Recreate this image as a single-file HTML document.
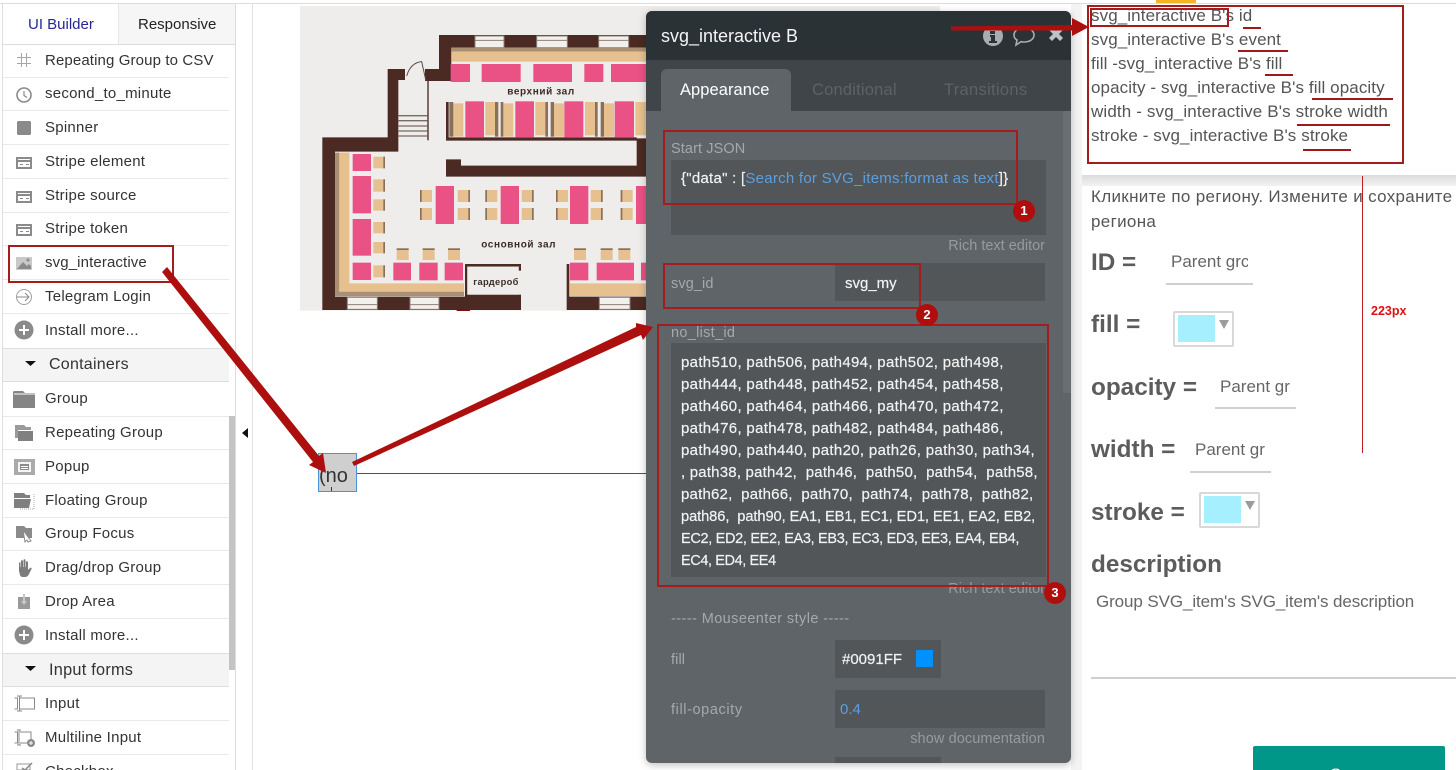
<!DOCTYPE html>
<html><head><meta charset="utf-8"><title>svg_interactive</title>
<style>
html,body{margin:0;padding:0;background:#fff}
#p{position:relative;width:1456px;height:770px;overflow:hidden;background:#fff;font-family:"Liberation Sans","Noto Sans CJK SC",sans-serif}
.a,.t,.s,.l,.pt,.r,.u,.sep,.d{position:absolute}
.t,.s,.pt,.r{white-space:nowrap}
.s{left:45px;font-size:15px;letter-spacing:.25px;line-height:20px;color:#333}
.sep{left:3px;width:226px;height:1px;background:#e9e9e9}
.pt{font-size:14.5px;line-height:20px;color:#a4a9ad;letter-spacing:.1px}
.l{left:681px;font-size:15px;line-height:22px;color:#f2f2f2;letter-spacing:.32px;-webkit-text-stroke:.2px #f2f2f2;white-space:pre}
.r{left:1091px;font-size:17px;line-height:24px;color:#555;letter-spacing:.1px}
.b{font-size:24.3px;font-weight:bold;color:#5c5c5c;line-height:30px;position:absolute;white-space:nowrap;left:1091px}
.u{height:2px;background:#a01818}
.i{position:absolute;left:1171px;font-size:17px;line-height:24px;color:#666;white-space:nowrap;overflow:hidden}
.in{position:absolute;height:2px;background:#d0d0d0;width:81px}
.d{background:#525659}
.cb{position:absolute;width:57px;height:32px;border:2px solid #d8d8d8;border-radius:2px;background:#fff}
.cb i{position:absolute;left:3px;top:2px;width:37px;height:27px;background:#a6efff}
.cb b{position:absolute;left:44px;top:7px;width:0;height:0;border-left:5px solid transparent;border-right:5px solid transparent;border-top:9px solid #9b9b9b}
.rr{position:absolute;border:2px solid #a51c1c;box-sizing:border-box}
.n{position:absolute;width:22px;height:22px;border-radius:50%;background:#b00d0d;color:#fff;font:bold 13px/22px "Liberation Sans",sans-serif;text-align:center}
</style></head><body><div id="p">

<!-- top line -->
<div class="a" style="left:0;top:3px;width:1456px;height:1px;background:#dcdcdc"></div>
<div class="a" style="left:1156px;top:0;width:40px;height:3px;background:#f3b324"></div>

<!-- sidebar -->
<div class="a" style="left:2px;top:4px;width:1px;height:766px;background:#dedede"></div>
<div class="a" style="left:235px;top:4px;width:1px;height:766px;background:#dcdcdc"></div>
<div class="a" style="left:252px;top:4px;width:1px;height:766px;background:#e2e2e2"></div>
<div class="a" style="left:118px;top:4px;width:117px;height:40px;background:#f6f6f6;border-left:1px solid #e8e8e8;box-sizing:border-box"></div>
<div class="a" style="left:3px;top:44px;width:232px;height:1px;background:#dcdcdc"></div>
<div class="t" style="left:28px;top:15px;font-size:15px;line-height:20px;color:#26269a">UI Builder</div>
<div class="t" style="left:138px;top:15px;font-size:15px;line-height:20px;color:#222">Responsive</div>

<div class="a" style="left:3px;top:348px;width:226px;height:34px;background:#f4f4f4;border-top:1px solid #dedede;border-bottom:1px solid #dedede;box-sizing:border-box"></div>
<div class="a" style="left:3px;top:653px;width:226px;height:34px;background:#f4f4f4;border-top:1px solid #dedede;border-bottom:1px solid #dedede;box-sizing:border-box"></div>
<div class="a" style="left:229px;top:416px;width:6px;height:254px;background:#c4c4c4"></div>

<div class="sep" style="top:77px"></div><div class="sep" style="top:110px"></div><div class="sep" style="top:144px"></div><div class="sep" style="top:178px"></div><div class="sep" style="top:212px"></div><div class="sep" style="top:245px"></div><div class="sep" style="top:279px"></div><div class="sep" style="top:313px"></div><div class="sep" style="top:416px"></div><div class="sep" style="top:449px"></div><div class="sep" style="top:483px"></div><div class="sep" style="top:517px"></div><div class="sep" style="top:550px"></div><div class="sep" style="top:584px"></div><div class="sep" style="top:618px"></div><div class="sep" style="top:720px"></div><div class="sep" style="top:754px"></div>

<div class="s" style="top:51px;letter-spacing:.12px">Repeating Group to CSV</div>
<div class="s" style="top:84px">second_to_minute</div>
<div class="s" style="top:118px">Spinner</div>
<div class="s" style="top:152px">Stripe element</div>
<div class="s" style="top:186px">Stripe source</div>
<div class="s" style="top:219px">Stripe token</div>
<div class="s" style="top:253px;letter-spacing:.12px">svg_interactive</div>
<div class="s" style="top:287px">Telegram Login</div>
<div class="s" style="top:321px">Install more...</div>
<div class="s" style="top:355px;left:49px;font-size:16px">Containers</div>
<div class="s" style="top:389px">Group</div>
<div class="s" style="top:423px">Repeating Group</div>
<div class="s" style="top:457px">Popup</div>
<div class="s" style="top:491px">Floating Group</div>
<div class="s" style="top:524px">Group Focus</div>
<div class="s" style="top:558px">Drag/drop Group</div>
<div class="s" style="top:592px">Drop Area</div>
<div class="s" style="top:626px">Install more...</div>
<div class="s" style="top:660px;left:49px;font-size:16.3px">Input forms</div>
<div class="s" style="top:694px">Input</div>
<div class="s" style="top:728px">Multiline Input</div>
<div class="s" style="top:762px">Checkbox</div>

<svg class="a" style="left:0;top:0" width="252" height="770" viewBox="0 0 252 770">
<g fill="#8a8a8a" stroke="none">
<!-- hash -->
<path d="M17 57h14v1H17zM17 63h14v1H17zM21 53h1v14h-1zM26 53h1v14h-1z" fill="#a5a5a5"/>
<!-- clock -->
<circle cx="24" cy="95" r="7" fill="none" stroke="#8a8a8a" stroke-width="1.6"/><path d="M24 91v4.500l3 2" fill="none" stroke="#8a8a8a" stroke-width="1.2"/>
<!-- spinner -->
<rect x="17" y="121" width="14" height="14" rx="1.500"/>
<!-- cards -->
<path d="M16 157h16v12H16zM18 162v5h12v-5zM18 159v1h12v-1zM20 164h3v1h-3zM26 164h3v1h-3z" fill-rule="evenodd"/>
<path d="M16 191h16v12H16zM18 196v5h12v-5zM18 193v1h12v-1zM20 198h3v1h-3zM26 198h3v1h-3z" fill-rule="evenodd"/>
<path d="M16 224h16v12H16zM18 229v5h12v-5zM18 226v1h12v-1zM20 231h3v1h-3zM26 231h3v1h-3z" fill-rule="evenodd"/>
<!-- image -->
<path d="M16 257h16v13H16z" fill="#c9c9c9"/><path d="M17 269l6-7 4 4 2-2 2 2v3z"/><circle cx="28" cy="260" r="1.500" fill="#8a8a8a"/>
<!-- login -->
<circle cx="24" cy="297" r="7.500" fill="none" stroke="#a0a0a0" stroke-width="1"/><path d="M17 297h11M25 293l4 4-4 4" fill="none" stroke="#8a8a8a" stroke-width="1"/>
<!-- plus -->
<circle cx="24" cy="330" r="9.500"/><path d="M23 325h2v4h4v2h-4v4h-2v-4h-4v-2h4z" fill="#fff"/>
<!-- triangle -->
<path d="M25 361h11l-5.500 5z" fill="#111"/>
<path d="M25 666h11l-5.500 5z" fill="#111"/>
<!-- folder -->
<path d="M13 392l1-1h9l2 2h10v15H13z" fill="#858585"/><path d="M14 394h21" stroke="#fff" stroke-width="1"/>
<!-- rep group -->
<path d="M15 425h9l2 2h5v3H18v8h-3z" fill="#9a9a9a"/><path d="M18 431h15v10H18z" fill="#808080"/><path d="M18 430.500h15" stroke="#fff"/>
<!-- popup -->
<path d="M14 459h21v16H14z" fill="#aaa"/><path d="M18 462h13v10H18z" fill="#f4f4f4"/><path d="M20 464h9v6h-9z" fill="#8a8a8a"/><path d="M21 466h7v1h-7zM21 468h7v1h-7z" fill="#fff"/>
<!-- floating -->
<path d="M14 493h10l2 2h4v3H14zM14 499h17l-2 9H14z" fill="#808080"/><path d="M20 509h14V494" fill="none" stroke="#aaa" stroke-width="1" stroke-dasharray="1 1"/>
<!-- group focus -->
<path d="M16 526h8l2 2h6v10H16z" fill="#8a8a8a"/><path d="M23 530l8 11-3 1-1-2-2 2z" fill="#fff" stroke="#8a8a8a"/>
<!-- hand -->
<path d="M19 572v-9c0-1 1.500-1 1.500 0v4h.5v-6c0-1 2-1 2 0v6h.5v-7c0-1 2-1 2 0v7h.5v-5c0-1 2-1 2 0v8l2-2c1-1 2 0 1.500 1l-3 6c-1 1.500-2 2-4 2h-2c-2 0-3-2-3-5z" fill="#7c7c7c"/>
<!-- drop -->
<path d="M18 597h12v12H18z" fill="#9a9a9a"/><path d="M23 594h2v7h2l-3 4-3-4h2z" fill="#c8c8c8"/>
<circle cx="24" cy="635" r="9.500"/><path d="M23 630h2v4h4v2h-4v4h-2v-4h-4v-2h4z" fill="#fff"/>
<!-- input -->
<path d="M19.500 698h15v11h-15M14.500 698h3v11h-3" fill="none" stroke="#8a8a8a"/><path d="M19.500 696v15M17 696h5M17 711h5" stroke="#8a8a8a" fill="none"/>
<path d="M14.500 732h3v11h-3M19 730v15M17 730h4M17 745h4M20 732h11v8M20 743h7" fill="none" stroke="#8a8a8a"/><circle cx="31" cy="743" r="4"/><path d="M29 743h4M31 741v4" stroke="#fff"/>
<path d="M17 764h13v6H17z" fill="none" stroke="#9a9a9a"/><path d="M22 768l3 2 7-7" fill="none" stroke="#8a8a8a" stroke-width="1.500"/>
<!-- collapse -->
<path d="M248 428v10l-6-5z" fill="#111"/>
</g>
</svg>

<!-- floor plan -->
<svg class="a" style="left:290px;top:0" width="360" height="320" viewBox="0 0 1080 960">
<rect x="30" y="18" width="1050" height="914" fill="#eeedeb"/>
<g fill="#4a2a22">
<path d="M447 105H1080V143H484V243H405V207H447Z"/>
<path d="M293 207H345V240H325V455H135V890H525V930H97V412H293Z"/>
<rect x="412" y="243" width="4" height="178"/>
<path d="M468 306h8v106H1040V415H1070V530H468V478H513V497H1040V422H468Z"/>
<path d="M525 792H693V800H532V890H525Z"/>
<rect x="686" y="800" width="7" height="12"/>
<path d="M525 884H693V930H525Z"/>
<path d="M830 792h8V890H1080V930H830Z"/>
</g>
<rect x="532" y="812" width="154" height="72" fill="#eeedeb"/>
<rect x="532" y="800" width="154" height="12" fill="#eeedeb"/>
<g fill="#f2f0ec" stroke="#8f8078" stroke-width="3">
<rect x="555" y="108" width="87" height="35"/><rect x="740" y="108" width="92" height="35"/><rect x="926" y="108" width="90" height="35"/>
<rect x="172" y="892" width="90" height="36"/><rect x="360" y="892" width="87" height="36"/><rect x="928" y="892" width="92" height="36"/>
</g>
<path d="M555 121h87M740 121h92M926 121h90M172 914h90M360 914h87M928 914h92" stroke="#8f8078" stroke-width="3"/>
<path d="M484 143H1080V155H484ZM135 458H148V888H135ZM135 875H522V888H135Z" fill="#ab8f72"/>
<path d="M484 155H1080V185H484ZM148 458H178V850H522V875H148ZM840 850H1080V888H840Z" fill="#e6c08f"/>
<g fill="#e6c08f">
<rect x="490" y="310" width="30" height="100"/><rect x="586" y="306" width="30" height="100"/><rect x="640" y="310" width="30" height="100"/><rect x="736" y="306" width="30" height="100"/><rect x="792" y="310" width="30" height="100"/><rect x="885" y="306" width="30" height="100"/><rect x="942" y="310" width="30" height="100"/><rect x="1036" y="306" width="44" height="100"/>
<rect x="250" y="470" width="35" height="35"/><rect x="250" y="538" width="35" height="37"/><rect x="250" y="598" width="35" height="34"/><rect x="250" y="666" width="35" height="34"/><rect x="250" y="726" width="35" height="34"/><rect x="250" y="796" width="35" height="36"/>
<rect x="390" y="570" width="36" height="36"/><rect x="390" y="624" width="36" height="36"/><rect x="503" y="570" width="37" height="36"/><rect x="503" y="624" width="37" height="36"/>
<rect x="586" y="570" width="36" height="36"/><rect x="586" y="624" width="36" height="36"/><rect x="695" y="570" width="36" height="36"/><rect x="695" y="624" width="36" height="36"/>
<rect x="798" y="570" width="36" height="36"/><rect x="798" y="624" width="36" height="36"/><rect x="902" y="570" width="36" height="36"/><rect x="902" y="624" width="36" height="36"/>
<rect x="992" y="570" width="36" height="36"/><rect x="992" y="624" width="36" height="36"/>
<rect x="320" y="745" width="36" height="35"/><rect x="398" y="745" width="36" height="35"/><rect x="474" y="745" width="36" height="35"/><rect x="852" y="745" width="36" height="35"/><rect x="932" y="745" width="36" height="35"/><rect x="985" y="745" width="36" height="35"/>
</g>
<g fill="#8b7059">
<rect x="478" y="306" width="12" height="104"/><rect x="615" y="306" width="10" height="104"/><rect x="632" y="306" width="8" height="104"/><rect x="766" y="306" width="8" height="104"/><rect x="782" y="306" width="10" height="104"/><rect x="915" y="306" width="8" height="104"/><rect x="932" y="306" width="10" height="104"/>
<rect x="280" y="470" width="5" height="35"/><rect x="280" y="538" width="5" height="37"/><rect x="280" y="598" width="5" height="34"/><rect x="280" y="666" width="5" height="34"/><rect x="280" y="726" width="5" height="34"/><rect x="280" y="796" width="5" height="36"/>
<rect x="390" y="570" width="5" height="36"/><rect x="390" y="624" width="5" height="36"/><rect x="535" y="570" width="5" height="36"/><rect x="535" y="624" width="5" height="36"/>
<rect x="586" y="570" width="5" height="36"/><rect x="586" y="624" width="5" height="36"/><rect x="726" y="570" width="5" height="36"/><rect x="726" y="624" width="5" height="36"/>
<rect x="798" y="570" width="5" height="36"/><rect x="798" y="624" width="5" height="36"/><rect x="933" y="570" width="5" height="36"/><rect x="933" y="624" width="5" height="36"/>
<rect x="992" y="570" width="5" height="36"/><rect x="992" y="624" width="5" height="36"/>
<rect x="320" y="745" width="36" height="5"/><rect x="398" y="745" width="36" height="5"/><rect x="474" y="745" width="36" height="5"/><rect x="852" y="745" width="36" height="5"/><rect x="932" y="745" width="36" height="5"/><rect x="985" y="745" width="36" height="5"/>
</g>
<g fill="#ea5185">
<rect x="482" y="192" width="58" height="54"/><rect x="575" y="192" width="117" height="54"/><rect x="730" y="192" width="116" height="54"/><rect x="883" y="192" width="57" height="54"/><rect x="963" y="192" width="117" height="54"/>
<rect x="526" y="304" width="56" height="108"/><rect x="676" y="304" width="56" height="108"/><rect x="823" y="304" width="57" height="108"/><rect x="974" y="304" width="58" height="108"/>
<rect x="188" y="462" width="55" height="51"/><rect x="188" y="528" width="55" height="112"/><rect x="188" y="657" width="55" height="110"/><rect x="188" y="788" width="55" height="52"/>
<rect x="437" y="558" width="55" height="114"/><rect x="632" y="558" width="55" height="114"/><rect x="840" y="558" width="55" height="114"/><rect x="1038" y="558" width="42" height="114"/>
<rect x="310" y="788" width="53" height="53"/><rect x="388" y="788" width="55" height="53"/><rect x="464" y="788" width="55" height="53"/><rect x="840" y="788" width="55" height="53"/><rect x="920" y="788" width="112" height="53"/><rect x="1053" y="788" width="27" height="53"/>
</g>
<path d="M325 347h87M325 362h87M325 378h87M325 393h87M325 408h87" stroke="#7b6a62" stroke-width="4"/>
<path d="M350 228Q362 188 395 185L408 243" fill="none" stroke="#5a4a44" stroke-width="3"/>
<rect x="500" y="928" width="40" height="5" fill="#7a1010"/>
<g font-family="Liberation Sans,sans-serif" font-weight="bold" fill="#3d2b28" font-size="30" text-anchor="middle" letter-spacing="1.800">
<text x="753" y="284">верхний зал</text>
<text x="686" y="743">основной зал</text>
<text x="618" y="855" font-size="28" letter-spacing="1">гардероб</text>
</g>
</svg>
<div class="a" style="left:940px;top:4px;width:140px;height:7px;background:#fff"></div>
<div class="a" style="left:646px;top:6px;width:294px;height:5px;background:#eeedeb"></div>

<!-- h line + selected element -->
<div class="a" style="left:357px;top:472.500px;width:725px;height:1.500px;background:#c02020"></div>
<div class="a" style="left:318px;top:453px;width:39px;height:39px;box-sizing:border-box;background:#cfcfcf;border:1px solid #4b93d6;overflow:hidden"><div class="t" style="left:0;top:10px;font-size:20px;line-height:24px;color:#333">(no</div><div class="a" style="left:12px;top:33px;width:1px;height:4px;background:#333"></div></div>

<!-- right panel -->
<div class="a" style="left:1071px;top:4px;width:11px;height:766px;background:#f3f3f3"></div>
<div class="a" style="left:1082px;top:4px;width:374px;height:172px;background:#fff"></div>
<div class="a" style="left:1082px;top:175px;width:374px;height:11px;background:linear-gradient(#dcdcdc,#f2f2f2)"></div>
<div class="a" style="left:1082px;top:186px;width:374px;height:584px;background:#fff"></div>

<div class="r" style="top:4px">svg_interactive B's id</div>
<div class="r" style="top:28px">svg_interactive B's event</div>
<div class="r" style="top:52px">fill -svg_interactive B's fill</div>
<div class="r" style="top:76px">opacity - svg_interactive B's fill opacity</div>
<div class="r" style="top:100px;letter-spacing:.14px">width - svg_interactive B's stroke width</div>
<div class="r" style="top:124px">stroke - svg_interactive B's stroke</div>
<div class="r" style="top:185px;letter-spacing:.33px">Кликните по региону. Измените и сохраните</div>
<div class="r" style="top:210px;letter-spacing:.33px">региона</div>

<div class="u" style="left:1243px;top:27px;width:18px"></div>
<div class="u" style="left:1238px;top:50px;width:50px"></div>
<div class="u" style="left:1265px;top:74px;width:28px"></div>
<div class="u" style="left:1312px;top:98px;width:81px"></div>
<div class="u" style="left:1297px;top:124px;width:93px"></div>
<div class="u" style="left:1303px;top:149px;width:48px"></div>

<div class="b" style="top:248px">ID =</div>
<div class="i" style="top:250px;width:77px">Parent grc</div><div class="in" style="left:1166px;top:283px;width:87px"></div>
<div class="b" style="top:310px">fill =</div>
<div class="cb" style="left:1173px;top:311px"><i></i><b></b></div>
<div class="b" style="top:373px">opacity =</div>
<div class="i" style="left:1220px;top:375px;width:71px">Parent gr</div><div class="in" style="left:1215px;top:407px"></div>
<div class="b" style="top:435px">width =</div>
<div class="i" style="left:1195px;top:438px;width:71px">Parent gr</div><div class="in" style="left:1190px;top:471px"></div>
<div class="b" style="top:498px">stroke =</div>
<div class="cb" style="left:1199px;top:492px"><i></i><b></b></div>
<div class="b" style="top:550px">description</div>
<div class="r" style="left:1096px;top:590px;color:#666;letter-spacing:-.1px">Group SVG_item's SVG_item's description</div>
<div class="a" style="left:1091px;top:677px;width:365px;height:2px;background:#d0d0d0"></div>
<div class="a" style="left:1253px;top:746px;width:192px;height:30px;background:#009688;border-radius:2px"></div>
<div class="t" style="left:1330px;top:765px;font-size:17px;line-height:20px;color:#fff">Save</div>
<div class="a" style="left:1362px;top:176px;width:1px;height:277px;background:#c02020"></div>
<div class="t" style="left:1371px;top:303px;font-size:12.5px;line-height:16px;font-weight:bold;color:#e01010">223px</div>

<!-- editor panel -->
<div class="a" style="left:646px;top:11px;width:425px;height:752px;background:#5f6468;border-radius:6px;box-shadow:0 2px 8px rgba(0,0,0,.25);overflow:hidden">
 <div class="a" style="left:0;top:0;width:425px;height:49px;background:#2b3236"></div>
 <div class="a" style="left:0;top:49px;width:425px;height:51px;background:#3f4548"></div>
 <div class="a" style="left:15px;top:58px;width:130px;height:42px;background:#5f6468;border-radius:6px 6px 0 0"></div>
 <div class="a" style="left:417px;top:100px;width:8px;height:282px;background:#696e72"></div>
</div>
<div class="t" style="left:661px;top:25px;font-size:18px;line-height:22px;color:#f4f4f4">svg_interactive B</div>
<div class="t" style="left:680px;top:80px;font-size:16.5px;line-height:20px;color:#fff;letter-spacing:.05px">Appearance</div>
<div class="t" style="left:812px;top:80px;font-size:16.5px;line-height:20px;color:#5d6266;letter-spacing:.2px">Conditional</div>
<div class="t" style="left:944px;top:80px;font-size:16.5px;line-height:20px;color:#5d6266;letter-spacing:.3px">Transitions</div>
<svg class="a" style="left:980px;top:23px" width="90" height="26" viewBox="0 0 90 26">
<circle cx="13" cy="13" r="10" fill="#a8adb0"/><path d="M10 8h5v3h-5zM10 12h5v6h2v2h-8v-2h2v-4h-1z" fill="#2b3236"/>
<path d="M44 5c6 0 10 3 10 7s-4 7-10 7c-1 0-2 0-3-.300L36 22l1-5c-2-1-3-3-3-5 0-4 4-7 10-7z" fill="none" stroke="#a8adb0" stroke-width="1.600"/>
<path d="M69 7l3-3 11 11-3 3zM80 4l3 3-11 11-3-3z" fill="#bfc3c6"/>
</svg>

<div class="pt" style="left:671px;top:139px">Start JSON</div>
<div class="d" style="left:671px;top:160px;width:375px;height:75px"></div>
<div class="t" style="left:681px;top:169px;font-size:15px;line-height:20px;color:#f2f2f2;letter-spacing:.26px;-webkit-text-stroke:.2px #f2f2f2">{"data" : [<span style="color:#5c9fe0;-webkit-text-stroke:0">Search for SVG_items:format as text</span>]}</div>
<div class="pt" style="right:411px;top:236px;color:#979b9f;letter-spacing:0">Rich text editor</div>
<div class="pt" style="left:671px;top:274px">svg_id</div>
<div class="d" style="left:835px;top:263px;width:210px;height:38px"></div>
<div class="t" style="left:845px;top:274px;font-size:15px;line-height:20px;color:#f2f2f2;-webkit-text-stroke:.2px #f2f2f2">svg_my</div>
<div class="pt" style="left:671px;top:323px;letter-spacing:.3px">no_list_id</div>
<div class="d" style="left:671px;top:343px;width:375px;height:234px"></div>
<div class="l" style="top:352px">path510, path506, path494, path502, path498,</div>
<div class="l" style="top:374px">path444, path448, path452, path454, path458,</div>
<div class="l" style="top:396px">path460, path464, path466, path470, path472,</div>
<div class="l" style="top:418px">path476, path478, path482, path484, path486,</div>
<div class="l" style="top:440px;letter-spacing:.33px">path490, path440, path20, path26, path30, path34,</div>
<div class="l" style="top:462px;letter-spacing:.2px">, path38, path42,  path46,  path50,  path54,  path58,</div>
<div class="l" style="top:484px;letter-spacing:.2px">path62,  path66,  path70,  path74,  path78,  path82,</div>
<div class="l" style="top:506px;font-size:14.7px;letter-spacing:-.1px">path86,  path90, EA1, EB1, EC1, ED1, EE1, EA2, EB2,</div>
<div class="l" style="top:528px;font-size:14.5px;letter-spacing:-.32px">EC2, ED2, EE2, EA3, EB3, EC3, ED3, EE3, EA4, EB4,</div>
<div class="l" style="top:550px;font-size:14.5px;letter-spacing:-.4px">EC4, ED4, EE4</div>
<div class="pt" style="right:411px;top:579px;color:#979b9f;letter-spacing:0">Rich text editor</div>
<div class="pt" style="left:671px;top:609px;letter-spacing:.42px">----- Mouseenter style -----</div>
<div class="pt" style="left:671px;top:650px">fill</div>
<div class="d" style="left:835px;top:640px;width:106px;height:38px"></div>
<div class="t" style="left:842px;top:650px;font-size:15px;line-height:20px;color:#f2f2f2;-webkit-text-stroke:.2px #f2f2f2">#0091FF</div>
<div class="a" style="left:916px;top:650px;width:17px;height:17px;background:#0091ff"></div>
<div class="pt" style="left:671px;top:700px;letter-spacing:.6px">fill-opacity</div>
<div class="d" style="left:835px;top:690px;width:210px;height:38px"></div>
<div class="t" style="left:840px;top:700px;font-size:15px;line-height:20px;color:#5c9fe0">0.4</div>
<div class="pt" style="right:411px;top:729px;color:#979b9f;letter-spacing:.1px">show documentation</div>
<div class="d" style="left:835px;top:757px;width:106px;height:6px"></div>

<!-- annotation rectangles -->
<div class="rr" style="left:8px;top:245px;width:166px;height:38px"></div>
<div class="rr" style="left:663px;top:130px;width:355px;height:75px"></div>
<div class="rr" style="left:663px;top:263px;width:258px;height:46px"></div>
<div class="rr" style="left:657px;top:324px;width:392px;height:263px"></div>
<div class="rr" style="left:1087px;top:5px;width:317px;height:159px"></div>
<div class="rr" style="left:1090px;top:8px;width:139px;height:19px"></div>
<div class="n" style="left:1013px;top:200px">1</div>
<div class="n" style="left:916px;top:304px">2</div>
<div class="n" style="left:1044px;top:582px">3</div>

<!-- arrows -->
<svg class="a" style="left:0;top:0;pointer-events:none" width="1456" height="770" viewBox="0 0 1456 770">
<g fill="#ad0f0f">
<path d="M162 272L167 267L319 456L323 453L326 473L309 465L313 462Z"/>
<path d="M352 462L636 327L636 323L653 327L643 340L641 335L354 466Z"/>
<path d="M951 26.500L1072 25V18L1089 27L1072 36V30.500L951 30.500Z"/>
</g>
</svg>

</div></body></html>
